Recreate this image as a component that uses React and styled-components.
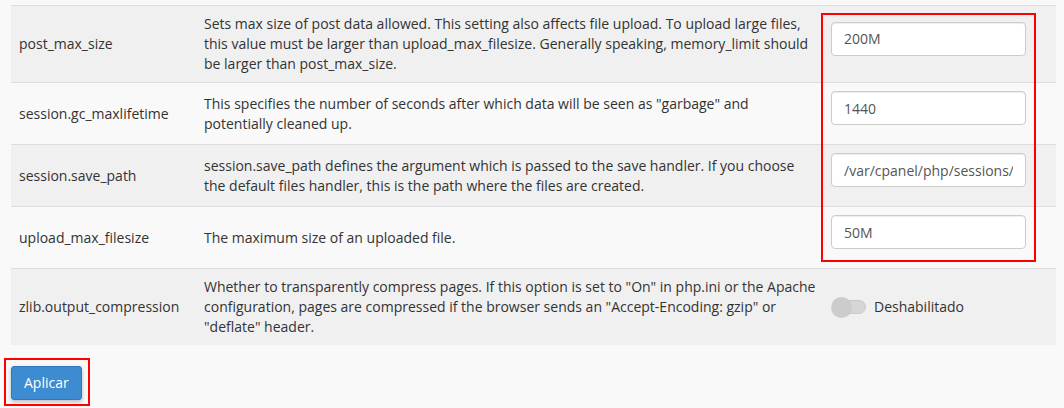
import React from 'react';
import styled, { createGlobalStyle } from 'styled-components';

const GlobalStyle = createGlobalStyle`
  html, body {
    margin: 0;
    padding: 0;
    background: #f9f9f9;
  }
  body {
    font-family: "Open Sans", "Liberation Sans", sans-serif;
    font-size: 14px;
    line-height: 20px;
    color: #333;
  }
`;

const Page = styled.div`
  position: relative;
  padding: 5px 8px 0 11px;
  height: 403px;
`;

const SettingsTable = styled.table`
  width: 1045px;
  border-collapse: collapse;
  table-layout: fixed;
`;

const Col = styled.col`
  width: ${({ $w }) => $w}px;
`;

const Row = styled.tr`
  background: ${({ $striped }) => ($striped ? '#f0f0f0' : '#f9f9f9')};
`;

const Cell = styled.td`
  border-top: 1px solid #dddddd;
  padding: 8px;
  vertical-align: middle;
`;

const DescCell = styled(Cell)`
  padding-right: 4px;
`;

const FieldBlock = styled.div`
  padding-bottom: 11px;
`;

const TextInput = styled.input`
  display: block;
  box-sizing: border-box;
  width: 195px;
  height: 34px;
  padding: 6px 12px;
  border: 1px solid #cccccc;
  border-radius: 4px;
  background: #fff;
  font-family: inherit;
  font-size: 14px;
  color: #555;
  box-shadow: inset 0 1px 1px rgba(0, 0, 0, 0.075);
  outline: none;
`;

const SwitchWrap = styled.div`
  display: flex;
  align-items: center;
  gap: 8px;
  color: #333;
`;

const Switch = styled.div`
  display: flex;
  align-items: center;
`;

const Knob = styled.span`
  position: relative;
  z-index: 1;
  width: 21px;
  height: 21px;
  border-radius: 50%;
  background: #cccccc;
`;

const Track = styled.span`
  box-sizing: border-box;
  width: 28px;
  height: 14px;
  margin-left: -14px;
  border-radius: 7px;
  background: #d6d6d6;
  border: 1px solid #c8c8c8;
`;

const Actions = styled.div`
  padding-top: 21px;
`;

const PrimaryButton = styled.button`
  box-sizing: border-box;
  height: 34px;
  padding: 6px 12px;
  font-family: inherit;
  font-size: 14px;
  line-height: 20px;
  color: #fff;
  background: #3d8bd0;
  border: 1px solid #2f79bb;
  border-radius: 3px;
  box-shadow: 0 2px 4px rgba(0, 0, 0, 0.25);
  cursor: pointer;
`;

const Highlight = styled.div`
  position: absolute;
  box-sizing: border-box;
  border: 2px solid #ff0000;
  pointer-events: none;
  left: ${({ $x }) => $x}px;
  top: ${({ $y }) => $y}px;
  width: ${({ $w }) => $w}px;
  height: ${({ $h }) => $h}px;
`;

const settings = [
  {
    name: 'post_max_size',
    desc: 'Sets max size of post data allowed. This setting also affects file upload. To upload large files, this value must be larger than upload_max_filesize. Generally speaking, memory_limit should be larger than post_max_size.',
    value: '200M',
  },
  {
    name: 'session.gc_maxlifetime',
    desc: 'This specifies the number of seconds after which data will be seen as "garbage" and potentially cleaned up.',
    value: '1440',
  },
  {
    name: 'session.save_path',
    desc: 'session.save_path defines the argument which is passed to the save handler. If you choose the default files handler, this is the path where the files are created.',
    value: '/var/cpanel/php/sessions/',
  },
  {
    name: 'upload_max_filesize',
    desc: 'The maximum size of an uploaded file.',
    value: '50M',
  },
  {
    name: 'zlib.output_compression',
    desc: 'Whether to transparently compress pages. If this option is set to "On" in php.ini or the Apache configuration, pages are compressed if the browser sends an "Accept-Encoding: gzip" or "deflate" header.',
    toggle: 'Deshabilitado',
  },
];

export default function App() {
  return (
    <>
      <GlobalStyle />
      <Page>
        <SettingsTable>
          <colgroup>
            <Col $w={185} />
            <Col $w={627} />
            <Col $w={233} />
          </colgroup>
          <tbody>
            {settings.map((s, i) => (
              <Row key={s.name} $striped={i % 2 === 0}>
                <Cell>{s.name}</Cell>
                <DescCell>{s.desc}</DescCell>
                <Cell>
                  {s.toggle ? (
                    <SwitchWrap>
                      <Switch>
                        <Knob />
                        <Track />
                      </Switch>
                      {s.toggle}
                    </SwitchWrap>
                  ) : (
                    <FieldBlock>
                      <TextInput defaultValue={s.value} />
                    </FieldBlock>
                  )}
                </Cell>
              </Row>
            ))}
          </tbody>
        </SettingsTable>
        <Actions>
          <PrimaryButton>Aplicar</PrimaryButton>
        </Actions>
        <Highlight $x={821} $y={13} $w={215} $h={249} />
        <Highlight $x={4} $y={358} $w={86} $h={48} />
      </Page>
    </>
  );
}
